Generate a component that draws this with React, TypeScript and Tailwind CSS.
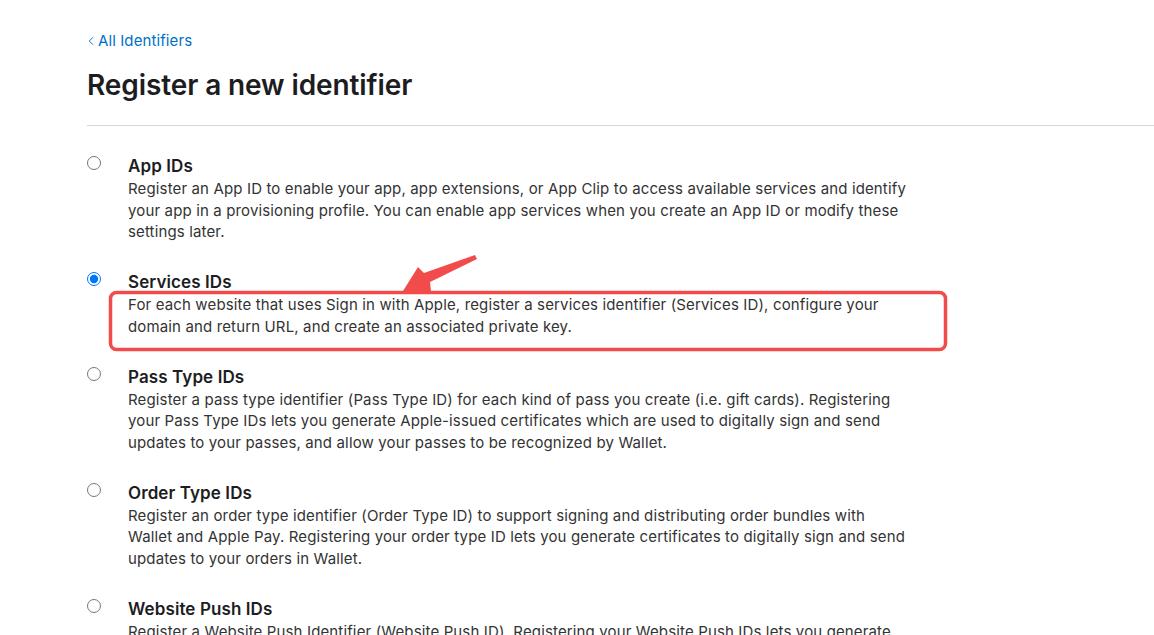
import { ChevronLeft } from 'lucide-react'

type Identifier = {
    id: string
    title: string
    description: string
}

const identifiers: Identifier[] = [
    {
        id: 'app',
        title: 'App IDs',
        description:
            'Register an App ID to enable your app, app extensions, or App Clip to access available services and identify your app in a provisioning profile. You can enable app services when you create an App ID or modify these settings later.',
    },
    {
        id: 'services',
        title: 'Services IDs',
        description:
            'For each website that uses Sign in with Apple, register a services identifier (Services ID), configure your domain and return URL, and create an associated private key.',
    },
    {
        id: 'pass',
        title: 'Pass Type IDs',
        description:
            'Register a pass type identifier (Pass Type ID) for each kind of pass you create (i.e. gift cards). Registering your Pass Type IDs lets you generate Apple-issued certificates which are used to digitally sign and send updates to your passes, and allow your passes to be recognized by Wallet.',
    },
    {
        id: 'order',
        title: 'Order Type IDs',
        description:
            'Register an order type identifier (Order Type ID) to support signing and distributing order bundles with Wallet and Apple Pay. Registering your order type ID lets you generate certificates to digitally sign and send updates to your orders in Wallet.',
    },
    {
        id: 'push',
        title: 'Website Push IDs',
        description:
            'Register a Website Push Identifier (Website Push ID). Registering your Website Push IDs lets you generate Apple-issued certificates which are used to send push notifications to your website.',
    },
]

function Annotation() {
    return (
        <svg className="pointer-events-none absolute left-0 top-0" width="1154" height="635">
            <rect x="110.5" y="292.5" width="835" height="57" rx="6" fill="none" stroke="#f24b4b" strokeWidth="3.5" />
            <polygon points="403,291 418,267 424,273 475,255 477,259 430,282 431,291" fill="#f24b4b" />
        </svg>
    )
}

export default function App() {
    return (
        <div className="relative h-[635px] w-full overflow-hidden bg-white font-['Inter','Liberation_Sans',sans-serif] text-[#1d1d1f]">
            <div className="pl-[87px] pt-[30px]">
                <a href="#" className="flex items-center text-[15px] leading-[22px] tracking-[0.1px] text-[#0070c9]">
                    <ChevronLeft className="-ml-[3px] h-[14px] w-[14px]" strokeWidth={1.6} />
                    <span>All Identifiers</span>
                </a>
                <h1 className="mt-[16px] text-[28px] font-semibold leading-[34px] tracking-[-0.1px] text-[#1d1d1f]">
                    Register a new identifier
                </h1>
                <div className="mt-[23px] border-t border-[#d6d6d6]" />

                <div className="mt-[29px] flex flex-col gap-[28px]">
                    {identifiers.map((item) => (
                        <label key={item.id} className="flex">
                            <div className="w-[41px] shrink-0">
                                <input
                                    type="radio"
                                    name="identifier"
                                    defaultChecked={item.id === 'services'}
                                    className="m-0 mt-[1px] block h-[14px] w-[14px]"
                                />
                            </div>
                            <div className="w-[785px]">
                                <div className="text-[17px] font-semibold leading-[23px] tracking-[0.1px] text-[#1d1d1f]">{item.title}</div>
                                <p className="text-[15px] leading-[21.7px] tracking-[0.14px] text-[#333333]">{item.description}</p>
                            </div>
                        </label>
                    ))}
                </div>
            </div>
            <Annotation />
        </div>
    )
}
